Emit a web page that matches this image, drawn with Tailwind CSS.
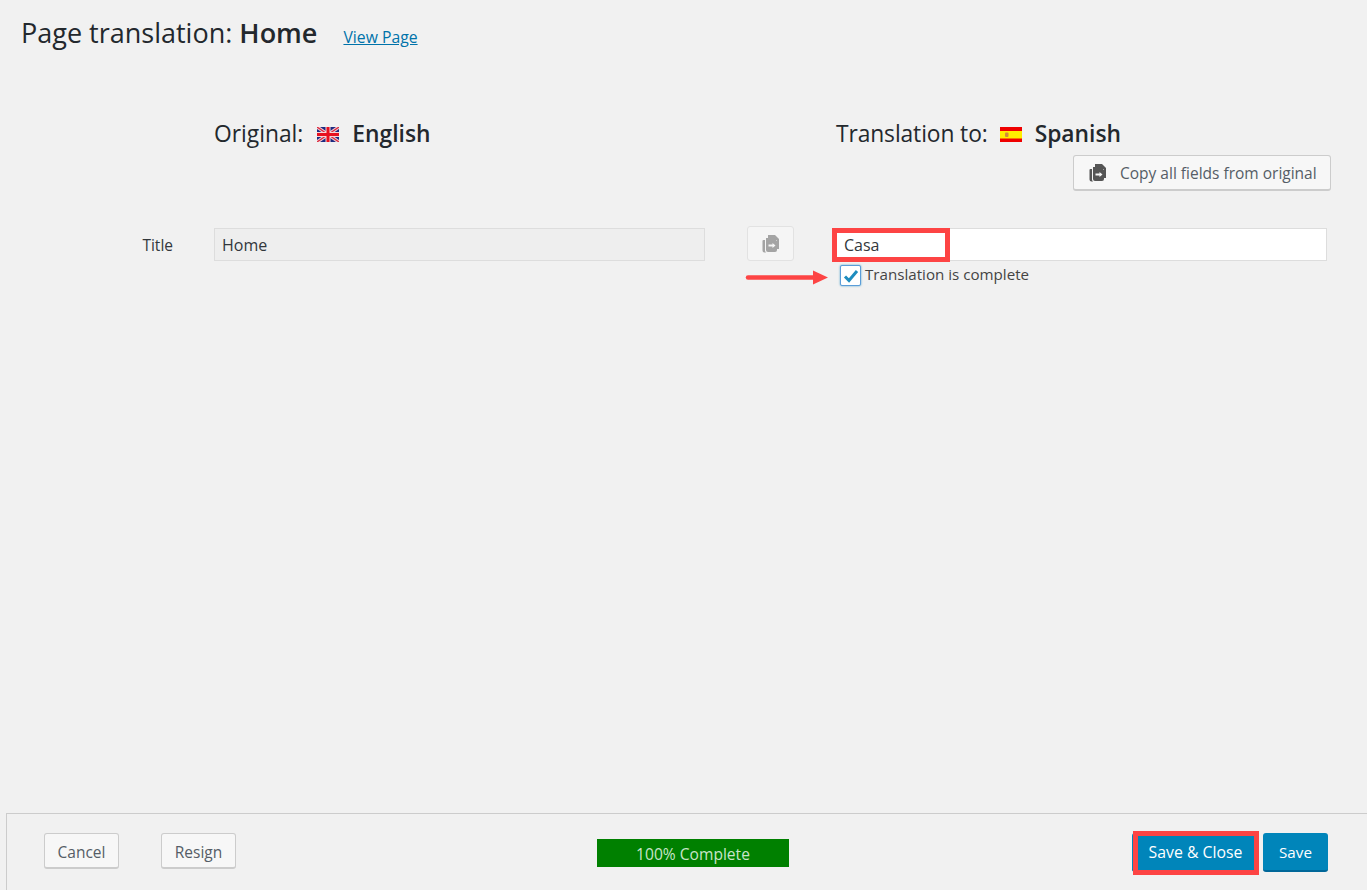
<!doctype html>
<html>
  <head>
    <title>Page translation: Home</title>
    <meta charset="UTF-8" />
    <script src="https://cdn.jsdelivr.net/npm/@tailwindcss/browser@4"></script>
  </head>
  <body class="relative h-[890px] w-[1367px] overflow-hidden bg-[#f1f1f1] font-['Open_Sans',sans-serif] text-[#23282d]">
    <!-- header -->
    <div class="flex h-[66px] items-baseline pl-[21px] pt-[13px]">
      <h1 class="text-[27px] leading-[40px]">Page translation: <b class="font-semibold">Home</b></h1>
      <a href="#" class="ml-[26px] text-[15.75px] text-[#0073aa] underline">View Page</a>
    </div>

    <!-- language headings -->
    <div class="mt-[47px] flex h-[42px] items-center">
      <div class="ml-[214px] flex w-[622px] items-center text-[22.8px]">
        <span>Original:</span>
        <svg class="ml-[14px] mr-[13px]" width="22" height="15" viewBox="0 0 22 15">
          <rect width="22" height="15" fill="#1c2a80" />
          <path d="M0 0L22 15M22 0L0 15" stroke="#f3c9d0" stroke-width="3.4" />
          <path d="M0 0L22 15M22 0L0 15" stroke="#d8283c" stroke-width="1.2" />
          <path d="M11 0V15M0 7.5H22" stroke="#f7d5d8" stroke-width="5" />
          <path d="M11 0V15M0 7.5H22" stroke="#e8101f" stroke-width="3" />
        </svg>
        <b class="font-semibold">English</b>
      </div>
      <div class="flex items-center text-[22.8px]">
        <span class="tracking-[-0.1px]">Translation to:</span>
        <svg class="ml-[12px] mr-[13px]" width="22" height="15" viewBox="0 0 22 15">
          <rect width="22" height="15" fill="#ef0000" />
          <rect y="4" width="22" height="7.5" fill="#ffee00" />
          <rect x="5" y="5.5" width="3.5" height="4.5" rx="1" fill="#d28a3c" />
        </svg>
        <b class="font-semibold">Spanish</b>
      </div>
    </div>

    <!-- copy all -->
    <div class="flex h-[36px] justify-end pr-[36px]">
      <button class="flex h-[36px] w-[258px] items-center rounded-[3px] border border-[#cccccc] border-b-2 bg-[#f7f7f7] pl-[15px] text-[15.5px] text-[#555d66]">
        <svg class="mr-[14px]" width="17" height="18" viewBox="0 0 17 18">
          <path fill="#555555" d="M6 0h7l4 4v10h-2V5l-1 0H6z" />
          <path fill="#555555" d="M4 3h8l3 3v9a2 2 0 0 1-2 2H6a2 2 0 0 1-2-2z" />
          <path fill="#555555" d="M1.500 5h1.500v11l1 1.500H2.500a2 2 0 0 1-2-2V6a1 1 0 0 1 1-1z" />
          <path fill="#f7f7f7" d="M6.500 9.500h4V8l3 2.500-3 2.500v-1.500h-4z" />
        </svg>
        <span class="mt-[2px]">Copy all fields from original</span>
      </button>
    </div>

    <!-- title row -->
    <div class="mt-[37px] flex items-start">
      <label class="w-[173px] pt-[6px] text-right text-[15.5px] leading-[22px] text-[#32373c]">Title</label>
      <input value="Home" disabled class="ml-[41px] h-[33px] w-[491px] border border-[#dddddd] bg-[#eeeeee] px-[7px] text-[16px] text-[#32373c]" />
      <button class="ml-[42px] -mt-[2px] flex h-[35px] w-[47px] items-center justify-center rounded-[3px] border border-[#e2e2e2] bg-[#f5f5f5]">
        <svg width="17" height="18" viewBox="0 0 17 18" opacity="0.5">
          <path fill="#555555" d="M6 0h7l4 4v10h-2V5l-1 0H6z" />
          <path fill="#555555" d="M4 3h8l3 3v9a2 2 0 0 1-2 2H6a2 2 0 0 1-2-2z" />
          <path fill="#555555" d="M1.500 5h1.500v11l1 1.500H2.500a2 2 0 0 1-2-2V6a1 1 0 0 1 1-1z" />
          <path fill="#f5f5f5" d="M6.500 9.500h4V8l3 2.500-3 2.500v-1.500h-4z" />
        </svg>
      </button>
      <div class="ml-[38px]">
        <input value="Casa" class="h-[33px] w-[495px] border border-[#dddddd] bg-white pl-[11px] text-[16px] text-[#32373c]" />
        <div class="mt-[4px] flex items-center pl-[8px]">
          <span class="flex h-[21px] w-[21px] items-center justify-center rounded-[2px] border border-[#5b9dd9] bg-white shadow-[0_0_2px_rgba(30,140,190,0.8)]">
            <svg width="16" height="14" viewBox="0 0 16 14"><path d="M2 7.500l4 4L14 2" fill="none" stroke="#1e8cbe" stroke-width="3" /></svg>
          </span>
          <span class="-mt-[2px] ml-[4px] text-[15.15px] text-[#444444]">Translation is complete</span>
        </div>
      </div>
    </div>

    <!-- footer -->
    <div class="absolute bottom-0 left-[6px] right-0 flex h-[77px] items-start border-l border-t border-[#cccccc] pl-[37px] pt-[19px]">
      <button class="h-[36px] w-[75px] rounded-[3px] border border-b-2 border-[#cccccc] bg-[#f7f7f7] pt-[4px] text-[15.5px] text-[#555d66]">Cancel</button>
      <button class="ml-[42px] h-[36px] w-[75px] rounded-[3px] border border-b-2 border-[#cccccc] bg-[#f7f7f7] pt-[4px] text-[15.5px] text-[#555d66]">Resign</button>
      <div class="ml-[361px] mt-[6px] flex h-[28px] w-[192px] items-center justify-center bg-[#008000] pt-[3px] text-[15.6px] text-[#c9e4c9]">100% Complete</div>
      <button class="ml-[343px] h-[39px] w-[124px] rounded-[3px] border-b-2 border-[#006799] bg-[#0085ba] pl-[3px] pt-[3px] text-[15.8px] text-white">Save &amp; Close</button>
      <button class="ml-[7px] h-[39px] w-[65px] rounded-[3px] border-b-2 border-[#006799] bg-[#0085ba] pt-[1px] text-[15.2px] text-white">Save</button>
    </div>

    <!-- annotations -->
    <div class="absolute left-[832px] top-[228px] h-[34px] w-[118px] border-[5px] border-[#fd4444]"></div>
    <div class="absolute left-[1133px] top-[831px] h-[44px] w-[126px] border-[5px] border-[#fd4444]"></div>
    <svg class="absolute left-[745px] top-[269px]" width="84" height="17" viewBox="0 0 84 17">
      <path d="M3 8.500H69" stroke="#fd4444" stroke-width="4.500" stroke-linecap="round" />
      <path d="M68 1.500L83 8.500L68 15.500z" fill="#fd4444" />
    </svg>
  </body>
</html>
